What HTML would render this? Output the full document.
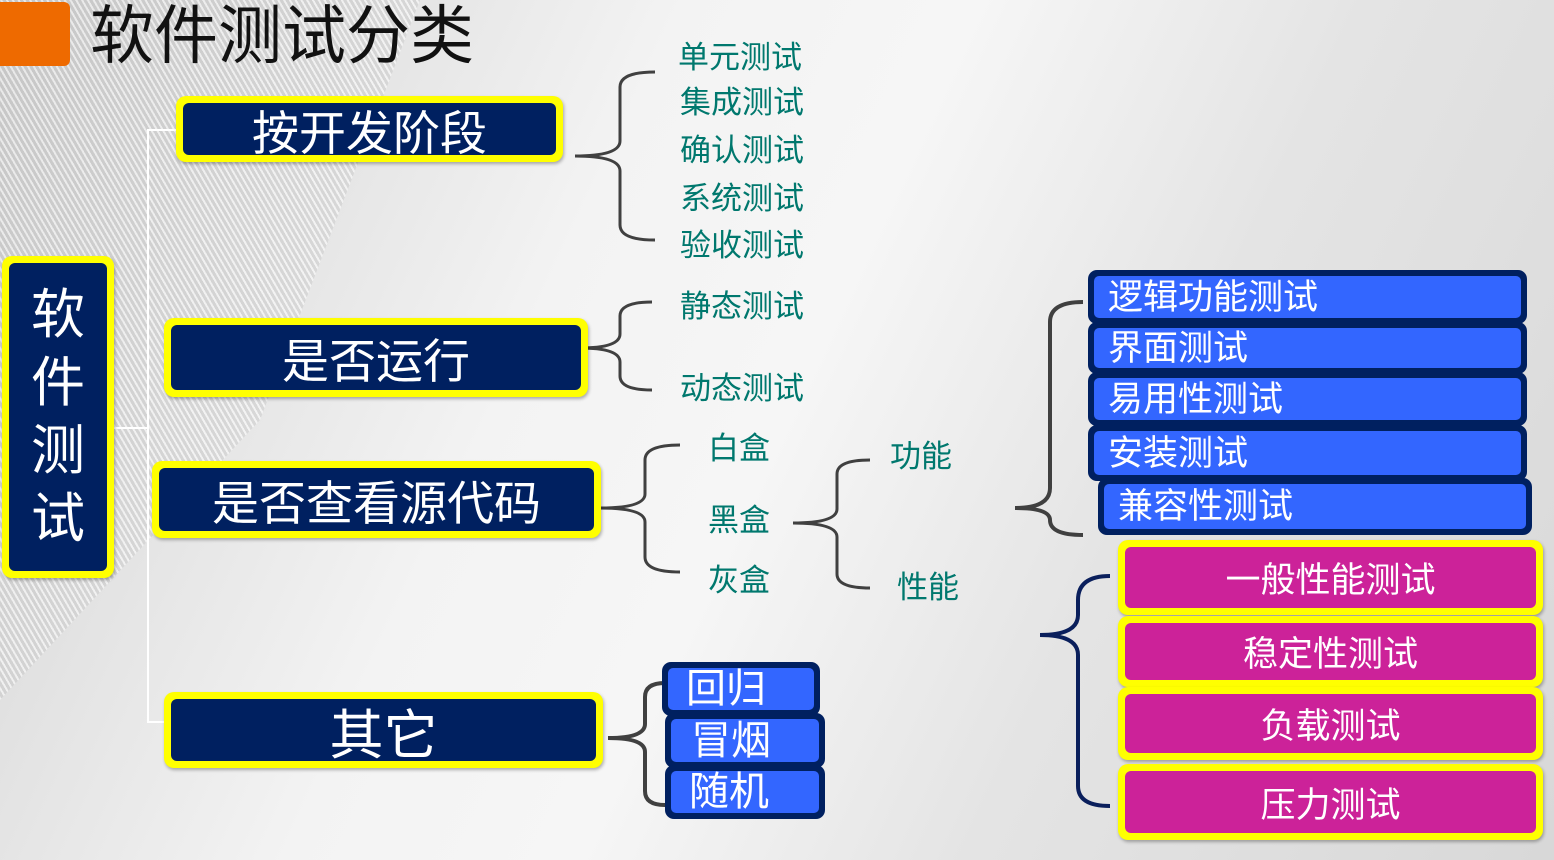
<!DOCTYPE html>
<html><head><meta charset="utf-8">
<style>
*{margin:0;padding:0;box-sizing:border-box}
body{width:1554px;height:860px;overflow:hidden;position:relative;
font-family:"Liberation Sans","Noto Sans CJK SC",sans-serif;
background:linear-gradient(115deg,#cfcfcf 0%,#e2e2e2 18%,#f3f3f3 35%,#f6f6f6 50%,#e4e4e4 70%,#d8d8d8 100%);}
.bg1{position:absolute;left:0;top:0;width:420px;height:860px;background:repeating-linear-gradient(60deg,rgba(255,255,255,.5) 0 2px,rgba(170,170,170,.25) 2px 5px);clip-path:polygon(0 0,420px 0,260px 420px,0 700px);}
.a{position:absolute}
.y{position:absolute;background:#ffff00;border-radius:10px;padding:7px;box-shadow:1px 2px 3px rgba(0,0,0,.3)}
.y>div{width:100%;height:100%;background:#002060;border-radius:6px;color:#fff;display:flex;align-items:center;justify-content:center}
.b{position:absolute;background:#002060;border-radius:9px;padding:6px}
.b>div{width:100%;height:100%;background:#3366ff;border-radius:5px;color:#fff;display:flex;align-items:center;font-size:35px;padding-left:14px;line-height:1}
.m>div{background:#cc2299;font-size:35px}
.t{position:absolute;color:#00786e;font-size:31px;line-height:1;white-space:nowrap}
</style></head><body>
<div class="bg1"></div>
<div class="a" style="left:0;top:2px;width:70px;height:64px;background:#ee6a00;border-radius:0 6px 6px 0"></div>
<div class="a" style="left:90px;top:-4px;font-size:64px;color:#111;line-height:80px">软件测试分类</div>

<svg class="a" style="left:0;top:0" width="1554" height="860">
<g fill="none" stroke="#fff" stroke-width="2">
<path d="M176 130 H148 V722 H164"/><path d="M114 428 H148"/>
</g>
<g fill="none" stroke="#404040" stroke-width="3">
<path d="M655 72 Q620 72 620 87 V141 Q620 156 575 156 Q620 156 620 171 V225 Q620 240 655 240"/>
<path d="M652 302 Q620 302 620 316 V334 Q620 348 580 348 Q620 348 620 362 V376 Q620 390 652 390"/>
<path d="M680 445 Q645 445 645 460 V494 Q645 508 600 508 Q645 508 645 522 V557 Q645 572 680 572"/>
<path d="M870 460 Q837 460 837 474 V509 Q837 523 793 523 Q837 523 837 537 V574 Q837 588 870 588"/>
<path d="M1083 302 Q1050 302 1050 322 V488 Q1050 508 1015 508 Q1050 508 1050 520 Q1050 535 1083 535" stroke-width="4"/>
<path d="M665 683 Q645 683 645 697 V724 Q645 738 608 738 Q645 738 645 752 V791 Q645 805 665 805" stroke-width="4"/>
</g>
<path d="M1110 576 Q1078 576 1078 600 V615 Q1078 635 1040 635 Q1078 635 1078 655 V786 Q1078 806 1110 806" fill="none" stroke="#0a1f5c" stroke-width="4"/>
</svg>

<div class="y" style="left:2px;top:256px;width:112px;height:322px"><div style="font-size:54px;line-height:68px;text-align:center;flex-direction:column">软<br>件<br>测<br>试</div></div>
<div class="y" style="left:176px;top:96px;width:387px;height:66px"><div style="font-size:47px">按开发阶段</div></div>
<div class="y" style="left:164px;top:318px;width:424px;height:79px"><div style="font-size:47px">是否运行</div></div>
<div class="y" style="left:152px;top:461px;width:449px;height:77px"><div style="font-size:47px">是否查看源代码</div></div>
<div class="y" style="left:164px;top:692px;width:439px;height:76px"><div style="font-size:54px">其它</div></div>

<div class="t" style="left:678px;top:42px">单元测试</div>
<div class="t" style="left:680px;top:87px">集成测试</div>
<div class="t" style="left:680px;top:135px">确认测试</div>
<div class="t" style="left:680px;top:183px">系统测试</div>
<div class="t" style="left:680px;top:230px">验收测试</div>
<div class="t" style="left:680px;top:291px">静态测试</div>
<div class="t" style="left:680px;top:373px">动态测试</div>
<div class="t" style="left:708px;top:433px">白盒</div>
<div class="t" style="left:708px;top:505px">黑盒</div>
<div class="t" style="left:708px;top:565px">灰盒</div>
<div class="t" style="left:890px;top:441px">功能</div>
<div class="t" style="left:897px;top:572px">性能</div>

<div class="b" style="left:1088px;top:270px;width:439px;height:54px"><div>逻辑功能测试</div></div>
<div class="b" style="left:1088px;top:322px;width:439px;height:52px"><div>界面测试</div></div>
<div class="b" style="left:1088px;top:372px;width:439px;height:54px"><div>易用性测试</div></div>
<div class="b" style="left:1088px;top:425px;width:439px;height:56px"><div>安装测试</div></div>
<div class="b" style="left:1098px;top:478px;width:434px;height:57px"><div>兼容性测试</div></div>

<div class="y m" style="left:1118px;top:540px;width:425px;height:75px"><div>一般性能测试</div></div>
<div class="y m" style="left:1118px;top:616px;width:425px;height:71px"><div>稳定性测试</div></div>
<div class="y m" style="left:1118px;top:687px;width:425px;height:73px"><div>负载测试</div></div>
<div class="y m" style="left:1118px;top:764px;width:425px;height:76px"><div>压力测试</div></div>

<div class="b" style="left:662px;top:662px;width:158px;height:54px"><div style="font-size:40px;padding-left:18px">回归</div></div>
<div class="b" style="left:665px;top:713px;width:160px;height:55px"><div style="font-size:40px;padding-left:20px">冒烟</div></div>
<div class="b" style="left:665px;top:765px;width:160px;height:54px"><div style="font-size:40px;padding-left:18px">随机</div></div>
</body></html>
